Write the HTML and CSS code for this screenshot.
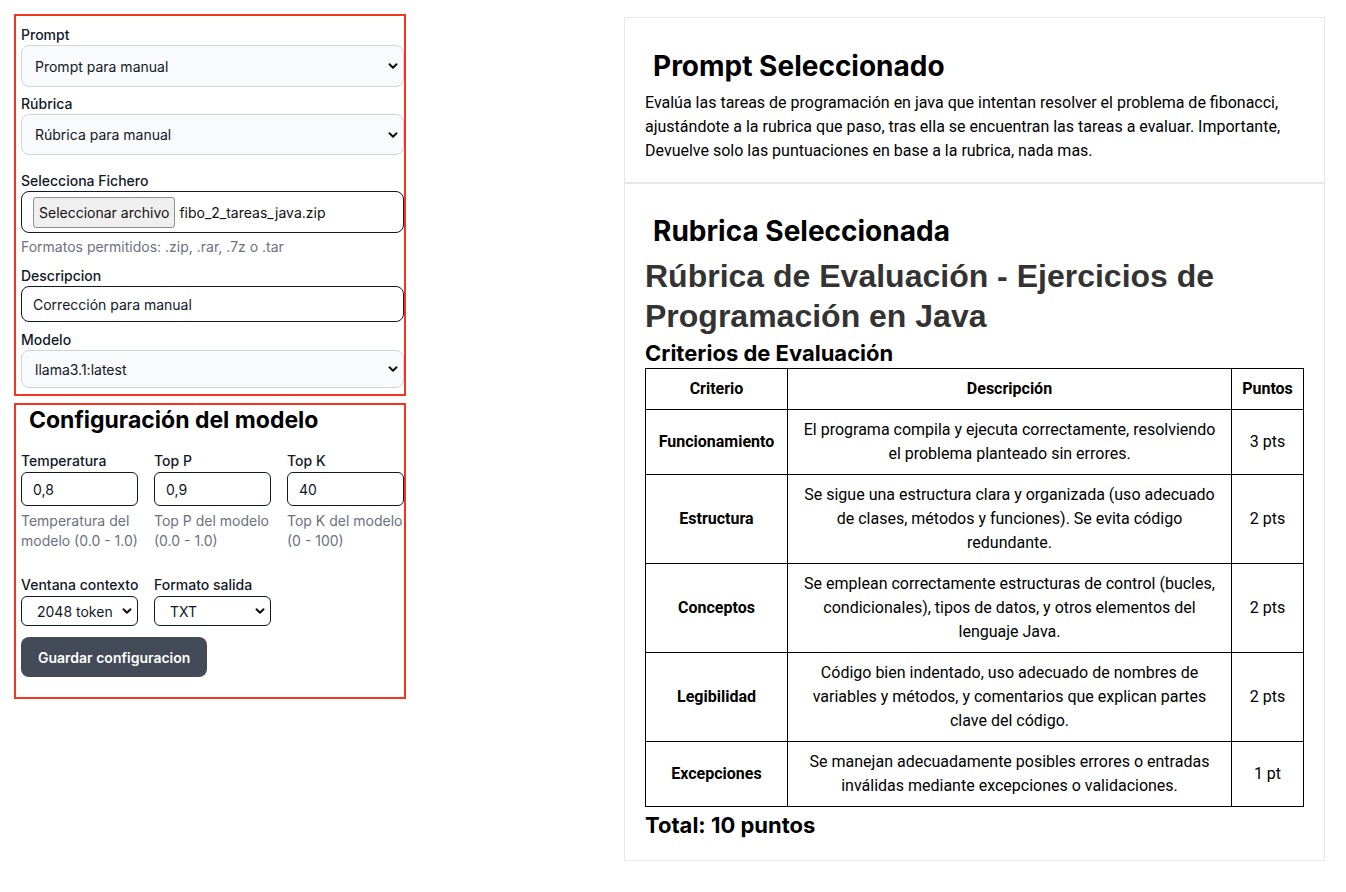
FILE: index.html
```html
<!DOCTYPE html>
<html lang="es">
<head>
<meta charset="utf-8">
<title>Corrección</title>
<link rel="stylesheet" href="styles.css">
</head>
<body>
<div class="page">
  <div class="left">
    <form class="box box-main">
      <label class="lbl">Prompt</label>
      <select class="sel sel-soft sel-a"><option>Prompt para manual</option></select>
      <label class="lbl lbl-gap7">Rúbrica</label>
      <select class="sel sel-soft sel-b"><option>Rúbrica para manual</option></select>
      <label class="lbl lbl-gap16">Selecciona Fichero</label>
      <div class="file">
        <button type="button" class="file-btn">Seleccionar archivo</button>
        <span class="file-name">fibo_2_tareas_java.zip</span>
      </div>
      <p class="help help-file">Formatos permitidos: .zip, .rar, .7z o .tar</p>
      <label class="lbl lbl-gap9">Descripcion</label>
      <input class="txt txt-desc" type="text" value="Corrección para manual">
      <label class="lbl lbl-gap8">Modelo</label>
      <select class="sel sel-soft sel-c"><option>llama3.1:latest</option></select>
    </form>
    <form class="box box-config">
      <h2 class="config-title">Configuración del modelo</h2>
      <div class="grid3">
        <div class="field">
          <label class="lbl">Temperatura</label>
          <input class="txt txt-num" type="text" value="0,8">
          <p class="help">Temperatura del modelo (0.0 - 1.0)</p>
        </div>
        <div class="field">
          <label class="lbl">Top P</label>
          <input class="txt txt-num" type="text" value="0,9">
          <p class="help">Top P del modelo (0.0 - 1.0)</p>
        </div>
        <div class="field">
          <label class="lbl">Top K</label>
          <input class="txt txt-num" type="text" value="40">
          <p class="help">Top K del modelo (0 - 100)</p>
        </div>
      </div>
      <div class="grid3 grid-row2">
        <div class="field">
          <label class="lbl">Ventana contexto</label>
          <select class="sel sel-small"><option>2048 token</option></select>
        </div>
        <div class="field">
          <label class="lbl">Formato salida</label>
          <select class="sel sel-small"><option>TXT</option></select>
        </div>
      </div>
      <button type="button" class="save">Guardar configuracion</button>
    </form>
  </div>

  <div class="panel">
    <section class="sec sec-prompt">
      <h2 class="sec-title">Prompt Seleccionado</h2>
      <p class="prompt-text">Evalúa las tareas de programación en java que intentan resolver el problema de fibonacci, ajustándote a la rubrica que paso, tras ella se encuentran las tareas a evaluar. Importante, Devuelve solo las puntuaciones en base a la rubrica, nada mas.</p>
    </section>
    <section class="sec sec-rubric">
      <h2 class="sec-title">Rubrica Seleccionada</h2>
      <h1 class="rubric-title">Rúbrica de Evaluación - Ejercicios de Programación en Java</h1>
      <h3 class="rubric-sub">Criterios de Evaluación</h3>
      <table class="rt">
        <thead>
          <tr><th class="c1">Criterio</th><th class="c2">Descripción</th><th class="c3">Puntos</th></tr>
        </thead>
        <tbody>
          <tr><th>Funcionamiento</th><td>El programa compila y ejecuta correctamente, resolviendo el problema planteado sin errores.</td><td>3 pts</td></tr>
          <tr><th>Estructura</th><td>Se sigue una estructura clara y organizada (uso adecuado de clases, métodos y funciones). Se evita código redundante.</td><td>2 pts</td></tr>
          <tr><th>Conceptos</th><td>Se emplean correctamente estructuras de control (bucles, condicionales), tipos de datos, y otros elementos del lenguaje Java.</td><td>2 pts</td></tr>
          <tr><th>Legibilidad</th><td>Código bien indentado, uso adecuado de nombres de variables y métodos, y comentarios que explican partes clave del código.</td><td>2 pts</td></tr>
          <tr><th>Excepciones</th><td>Se manejan adecuadamente posibles errores o entradas inválidas mediante excepciones o validaciones.</td><td>1 pt</td></tr>
        </tbody>
      </table>
      <h3 class="rubric-total">Total: 10 puntos</h3>
    </section>
  </div>
</div>
</body>
</html>
```
FILE: styles.css
```css
* { box-sizing: border-box; }
html, body { margin: 0; padding: 0; background: #fff; }
body { font-family: Inter, "Noto Sans", sans-serif; color: #111827; }

.page {
  display: grid;
  grid-template-columns: 392px 701px;
  column-gap: 218px;
  padding: 14px 0 0 14px;
  align-items: start;
}

.left { display: flex; flex-direction: column; gap: 7px; }

.box {
  border: 2px solid #f43520;
  display: flex;
  flex-direction: column;
  margin: 0;
}
.box-main { padding: 9px 0 6px 5px; }
.box-config { padding: 1px 0 20px 5px; }

.lbl {
  display: block;
  font-size: 14px;
  line-height: 20px;
  font-weight: 500;
  color: #111827;
  margin: 0;
  white-space: nowrap;
}
.lbl-gap7 { margin-top: 7px; }
.lbl-gap8 { margin-top: 8px; }
.lbl-gap9 { margin-top: 9px; }
.lbl-gap16 { margin-top: 16px; }

.sel {
  appearance: none;
  -webkit-appearance: none;
  font-family: Inter, "Noto Sans", sans-serif;
  font-size: 14px;
  color: #111827;
  border-radius: 8px;
  background-repeat: no-repeat;
  background-position: right 4px center;
  background-size: 12px 12px;
  background-image: url("data:image/svg+xml,%3Csvg xmlns='http://www.w3.org/2000/svg' viewBox='0 0 12 12'%3E%3Cpath d='M2.5 4.2 6 7.7 9.5 4.2' fill='none' stroke='%23111' stroke-width='2' stroke-linecap='round' stroke-linejoin='round'/%3E%3C/svg%3E");
  margin: 0;
}
.sel-soft {
  width: 383px;
  background-color: #f9fafb;
  border: 1px solid #d1d5db;
  padding: 0 28px 0 13px;
}
.sel-a { height: 42px; }
.sel-b { height: 41px; }
.sel-c { height: 38px; }

.file {
  display: flex;
  align-items: center;
  width: 383px;
  height: 42px;
  border: 1px solid #111827;
  border-radius: 8px;
  padding: 0 0 0 11px;
  gap: 4px;
}
.file-btn {
  font-family: Inter, "Noto Sans", sans-serif;
  font-size: 14px;
  color: #111;
  background: #efefef;
  border: 1px solid #8f8f8f;
  border-radius: 3px;
  height: 31px;
  padding: 0 5px;
  margin: 0;
}
.file-name { font-size: 14px; color: #111; }

.help {
  margin: 0;
  font-size: 14px;
  line-height: 20px;
  color: #6b7280;
}
.help-file { margin-top: 4px; }

.txt {
  font-family: Inter, "Noto Sans", sans-serif;
  font-size: 14px;
  color: #111827;
  border: 1px solid #111827;
  background: #fff;
  padding: 0 11px;
  margin: 0;
  outline: none;
}
.txt-desc { width: 383px; height: 36px; border-radius: 8px; }

.config-title {
  margin: 0 0 17px;
  padding-left: 8px;
  font-size: 23px;
  line-height: 28px;
  font-weight: 700;
  color: #000;
}

.grid3 {
  display: grid;
  grid-template-columns: repeat(3, 117px);
  column-gap: 16px;
}
.grid3 .lbl { margin-bottom: 1px; }
.txt-num { width: 117px; height: 34px; border-radius: 6px; margin-bottom: 5px; }
.grid-row2 { margin-top: 24px; }

.sel-small {
  width: 117px;
  height: 30px;
  border: 1px solid #111827;
  background-color: #fff;
  border-radius: 6px;
  padding: 0 24px 0 15px;
  background-position: right 4px center;
}

.save {
  align-self: flex-start;
  margin-top: 11px;
  height: 40px;
  padding: 0 17px;
  border: 0;
  border-radius: 8px;
  background: #434a58;
  color: #fff;
  font-family: Inter, "Noto Sans", sans-serif;
  font-size: 14px;
  font-weight: 600;
}

/* Right panel */
.panel {
  margin-top: 3px;
  border: 1px solid #e5e7eb;
  font-family: Roboto, "Liberation Sans", sans-serif;
  color: #000;
}
.sec { padding: 30px 20px 19px 20px; }
.sec-prompt { border-bottom: 2px solid #e5e7eb; }
.sec-title {
  margin: 0 0 7px;
  padding-left: 8px;
  font-family: Inter, "Noto Sans", sans-serif;
  font-size: 28px;
  line-height: 36px;
  font-weight: 700;
  color: #000;
}
.prompt-text {
  margin: 0;
  font-size: 16px;
  line-height: 24px;
}
.sec-rubric { padding-top: 29px; padding-bottom: 21px; }
.rubric-title {
  margin: 2px 0 0;
  font-family: "Liberation Sans", Arial, sans-serif;
  font-size: 32px;
  line-height: 40px;
  font-weight: 700;
  color: #333;
}
.rubric-sub, .rubric-total {
  margin: 0;
  font-family: Inter, "Noto Sans", sans-serif;
  font-size: 22px;
  line-height: 28px;
  font-weight: 700;
  color: #000;
}
.rubric-sub { margin-top: 3px; margin-bottom: 1px; }
.rubric-total { margin-top: 4px; }

.rt {
  width: 659px;
  border-collapse: collapse;
  font-size: 16px;
  line-height: 24px;
}
.rt th, .rt td {
  border: 1px solid #000;
  padding: 8px 8px;
  text-align: center;
  vertical-align: middle;
}
.rt th { font-weight: 700; }
.rt .c1 { width: 142px; }
.rt .c3 { width: 72px; }
```
